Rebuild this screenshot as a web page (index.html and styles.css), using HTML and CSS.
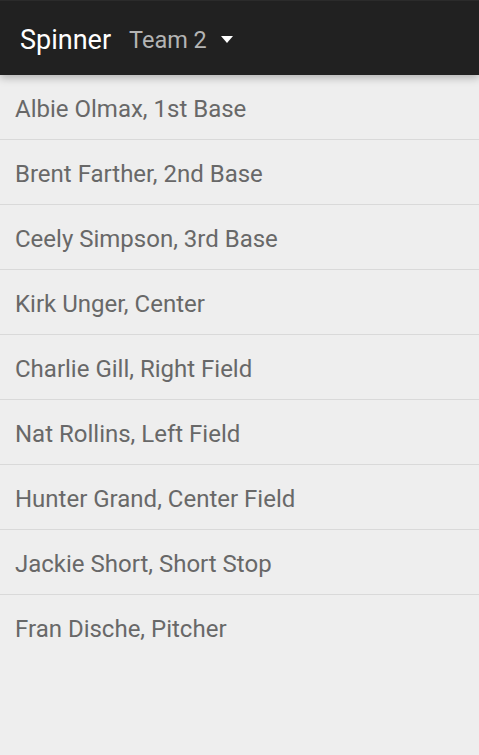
FILE: index.html
```html
<!DOCTYPE html>
<html>
<head>
<meta charset="utf-8">
<link rel="stylesheet" href="styles.css">
</head>
<body>
<header class="bar">
  <span class="title">Spinner</span>
  <span class="spinner">Team 2<svg class="caret" width="12" height="7" viewBox="0 0 12 7"><path d="M0 0H12L6 7Z" fill="#fff"/></svg></span>
</header>
<ul class="list">
  <li>Albie Olmax, 1st Base</li>
  <li>Brent Farther, 2nd Base</li>
  <li>Ceely Simpson, 3rd Base</li>
  <li>Kirk Unger, Center</li>
  <li>Charlie Gill, Right Field</li>
  <li>Nat Rollins, Left Field</li>
  <li>Hunter Grand, Center Field</li>
  <li>Jackie Short, Short Stop</li>
  <li>Fran Dische, Pitcher</li>
</ul>
</body>
</html>
```
FILE: styles.css
```css
html, body {
  margin: 0;
  padding: 0;
  height: 100%;
  background: #eeeeee;
  font-family: Roboto, "Noto Sans", sans-serif;
}
.bar {
  position: relative;
  z-index: 1;
  height: 75px;
  box-sizing: border-box;
  background: #212121;
  border-top: 1px solid #2b2b2b;
  display: flex;
  align-items: center;
  padding-left: 20px;
  padding-top: 3px;
  box-shadow: 0 3px 8px rgba(0,0,0,0.25);
}
.title {
  color: #ffffff;
  font-size: 27px;
  margin-right: 18px;
}
.spinner {
  color: #b4b4b4;
  font-size: 23.5px;
  display: flex;
  align-items: center;
}
.caret {
  margin-left: 14px;
  margin-top: -1px;
}
.list {
  list-style: none;
  margin: 0;
  padding: 0;
}
.list li {
  height: 64px;
  line-height: 68px;
  padding-left: 15px;
  color: #686868;
  font-size: 24px;
  border-bottom: 1px solid #d9d9d9;
}
.list li:last-child {
  border-bottom: none;
}
```
